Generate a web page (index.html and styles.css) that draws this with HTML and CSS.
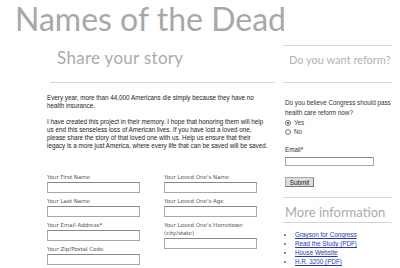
FILE: index.html
```html
<!DOCTYPE html>
<html>
  <head>
    <title>Names of the Dead</title>
    <meta charset="utf-8">
    <link rel="stylesheet" href="styles.css">
  </head>
  <body>
    <div class="title">Names of the Dead</div>

    <div class="page">
      <div class="main">
        <h2 class="subtitle">Share your story</h2>
        <div class="rule"></div>

        <p>Every year, more than 44,000 Americans die simply because they have no health insurance.</p>
        <p>I have created this project in their memory. I hope that honoring them will help us end this senseless loss of American lives. If you have lost a loved one, please share the story of that loved one with us. Help us ensure that their legacy is a more just America, where every life that can be saved will be saved.</p>

        <div class="storyform">
          <div class="formcol">
            <div class="field">
              <label>Your First Name</label>
              <input type="text">
            </div>
            <div class="field">
              <label>Your Last Name</label>
              <input type="text">
            </div>
            <div class="field">
              <label>Your Email Address<span class="req">*</span></label>
              <input type="text">
            </div>
            <div class="field">
              <label>Your Zip/Postal Code</label>
              <input type="text">
            </div>
          </div>
          <div class="formcol">
            <div class="field">
              <label>Your Loved One's Name</label>
              <input type="text">
            </div>
            <div class="field">
              <label>Your Loved One's Age</label>
              <input type="text">
            </div>
            <div class="field">
              <label>Your Loved One's Hometown (city/state)</label>
              <input type="text">
            </div>
          </div>
        </div>
      </div>

      <div class="sidebar">
        <div class="boxhead">Do you want reform?</div>
        <div class="poll">
          <div class="question">Do you believe Congress should pass health care reform now?</div>
          <div class="choice"><span class="radio checked"></span>Yes</div>
          <div class="choice"><span class="radio"></span>No</div>
          <div class="emaillabel">Email*</div>
          <input type="text" class="pollemail">
          <div><button class="submit">Submit</button></div>
        </div>
        <div class="boxhead more">More information</div>
        <ul class="links">
          <li><a href="#">Grayson for Congress</a></li>
          <li><a href="#">Read the Study (PDF)</a></li>
          <li><a href="#">House Website</a></li>
          <li><a href="#">H.R. 3200 (PDF)</a></li>
        </ul>
      </div>
    </div>
  </body>
</html>
```

FILE: styles.css
```css
body {
  margin: 0;
  background: #fff;
  font-family: "Liberation Sans", Arial, sans-serif;
  color: #222;
  overflow: hidden;
}
.title {
  height: 42px;
  line-height: 38px;
  padding-left: 15px;
  font-family: Lato, "Open Sans", sans-serif;
  font-size: 32px;
  color: #a8a8a8;
  white-space: nowrap;
}
.page {
  display: flex;
  padding-left: 47px;
}
.main {
  width: 228px;
}
.subtitle {
  margin: 6px 0 0 10px;
  font-family: Lato, "Open Sans", sans-serif;
  font-weight: normal;
  font-size: 17px;
  letter-spacing: 0.3px;
  line-height: 20px;
  color: #ababab;
}
.rule {
  margin: 14px 0 0 3px;
  border-top: 1px solid #d6d6d6;
}
p {
  width: 222px;
  margin: 11px 0 0 0;
  font-size: 6.3px;
  line-height: 8px;
}
p + p {
  margin-top: 8px;
}
.storyform {
  display: flex;
  gap: 23px;
  margin-top: 23px;
}
.formcol {
  width: 94px;
}
.field {
  margin-bottom: 4px;
}
.field label {
  display: block;
  font-family: "DejaVu Sans", Verdana, sans-serif;
  font-size: 5.5px;
  line-height: 8px;
  color: #555;
  margin-bottom: 1px;
}
.req {
  color: #c00;
}
input[type=text] {
  display: block;
  box-sizing: border-box;
  width: 93px;
  height: 11px;
  margin: 0;
  padding: 0;
  border: 1px solid #a8a8a8;
  border-top-color: #888;
  background: #fff;
}
.sidebar {
  width: 109px;
  margin-left: 8px;
  margin-top: 3px;
}
.boxhead {
  border-top: 1px solid #d6d6d6;
  border-bottom: 1px solid #d6d6d6;
  padding: 7px 0 15px 6px;
  font-family: Lato, "Open Sans", sans-serif;
  font-size: 11px;
  line-height: 14px;
  color: #b3b3b3;
  white-space: nowrap;
}
.poll {
  margin: 15px 0 0 2px;
  font-size: 6.3px;
  color: #333;
}
.question {
  line-height: 10px;
}
.choice {
  line-height: 9px;
  display: flex;
  align-items: center;
  gap: 3px;
  color: #444;
}
.radio {
  width: 4px;
  height: 4px;
  border: 1px solid #777;
  border-radius: 50%;
  background: #fff;
  position: relative;
}
.checked::after {
  content: "";
  position: absolute;
  left: 1px;
  top: 1px;
  width: 2px;
  height: 2px;
  border-radius: 50%;
  background: #333;
}
.emaillabel {
  margin-top: 10px;
  line-height: 8px;
}
.pollemail.pollemail {
  width: 89px;
  height: 9px;
  margin-top: 3px;
}
.submit {
  margin: 11px 0 0 0;
  padding: 0;
  width: 29px;
  height: 10px;
  font-family: "Liberation Sans", Arial, sans-serif;
  font-size: 6.3px;
  color: #222;
  background: #ddd;
  border: 1px solid #aaa;
  border-right-color: #777;
  border-bottom-color: #777;
}
.more {
  margin-top: 10px;
  padding: 7px 0 3px 2px;
  font-size: 13px;
  color: #aaa;
}
.links {
  margin: 7px 0 0 4px;
  padding: 0 0 0 8px;
  font-size: 6.3px;
  line-height: 9px;
  color: #666;
}
.links a {
  color: #2438b8;
}
```
